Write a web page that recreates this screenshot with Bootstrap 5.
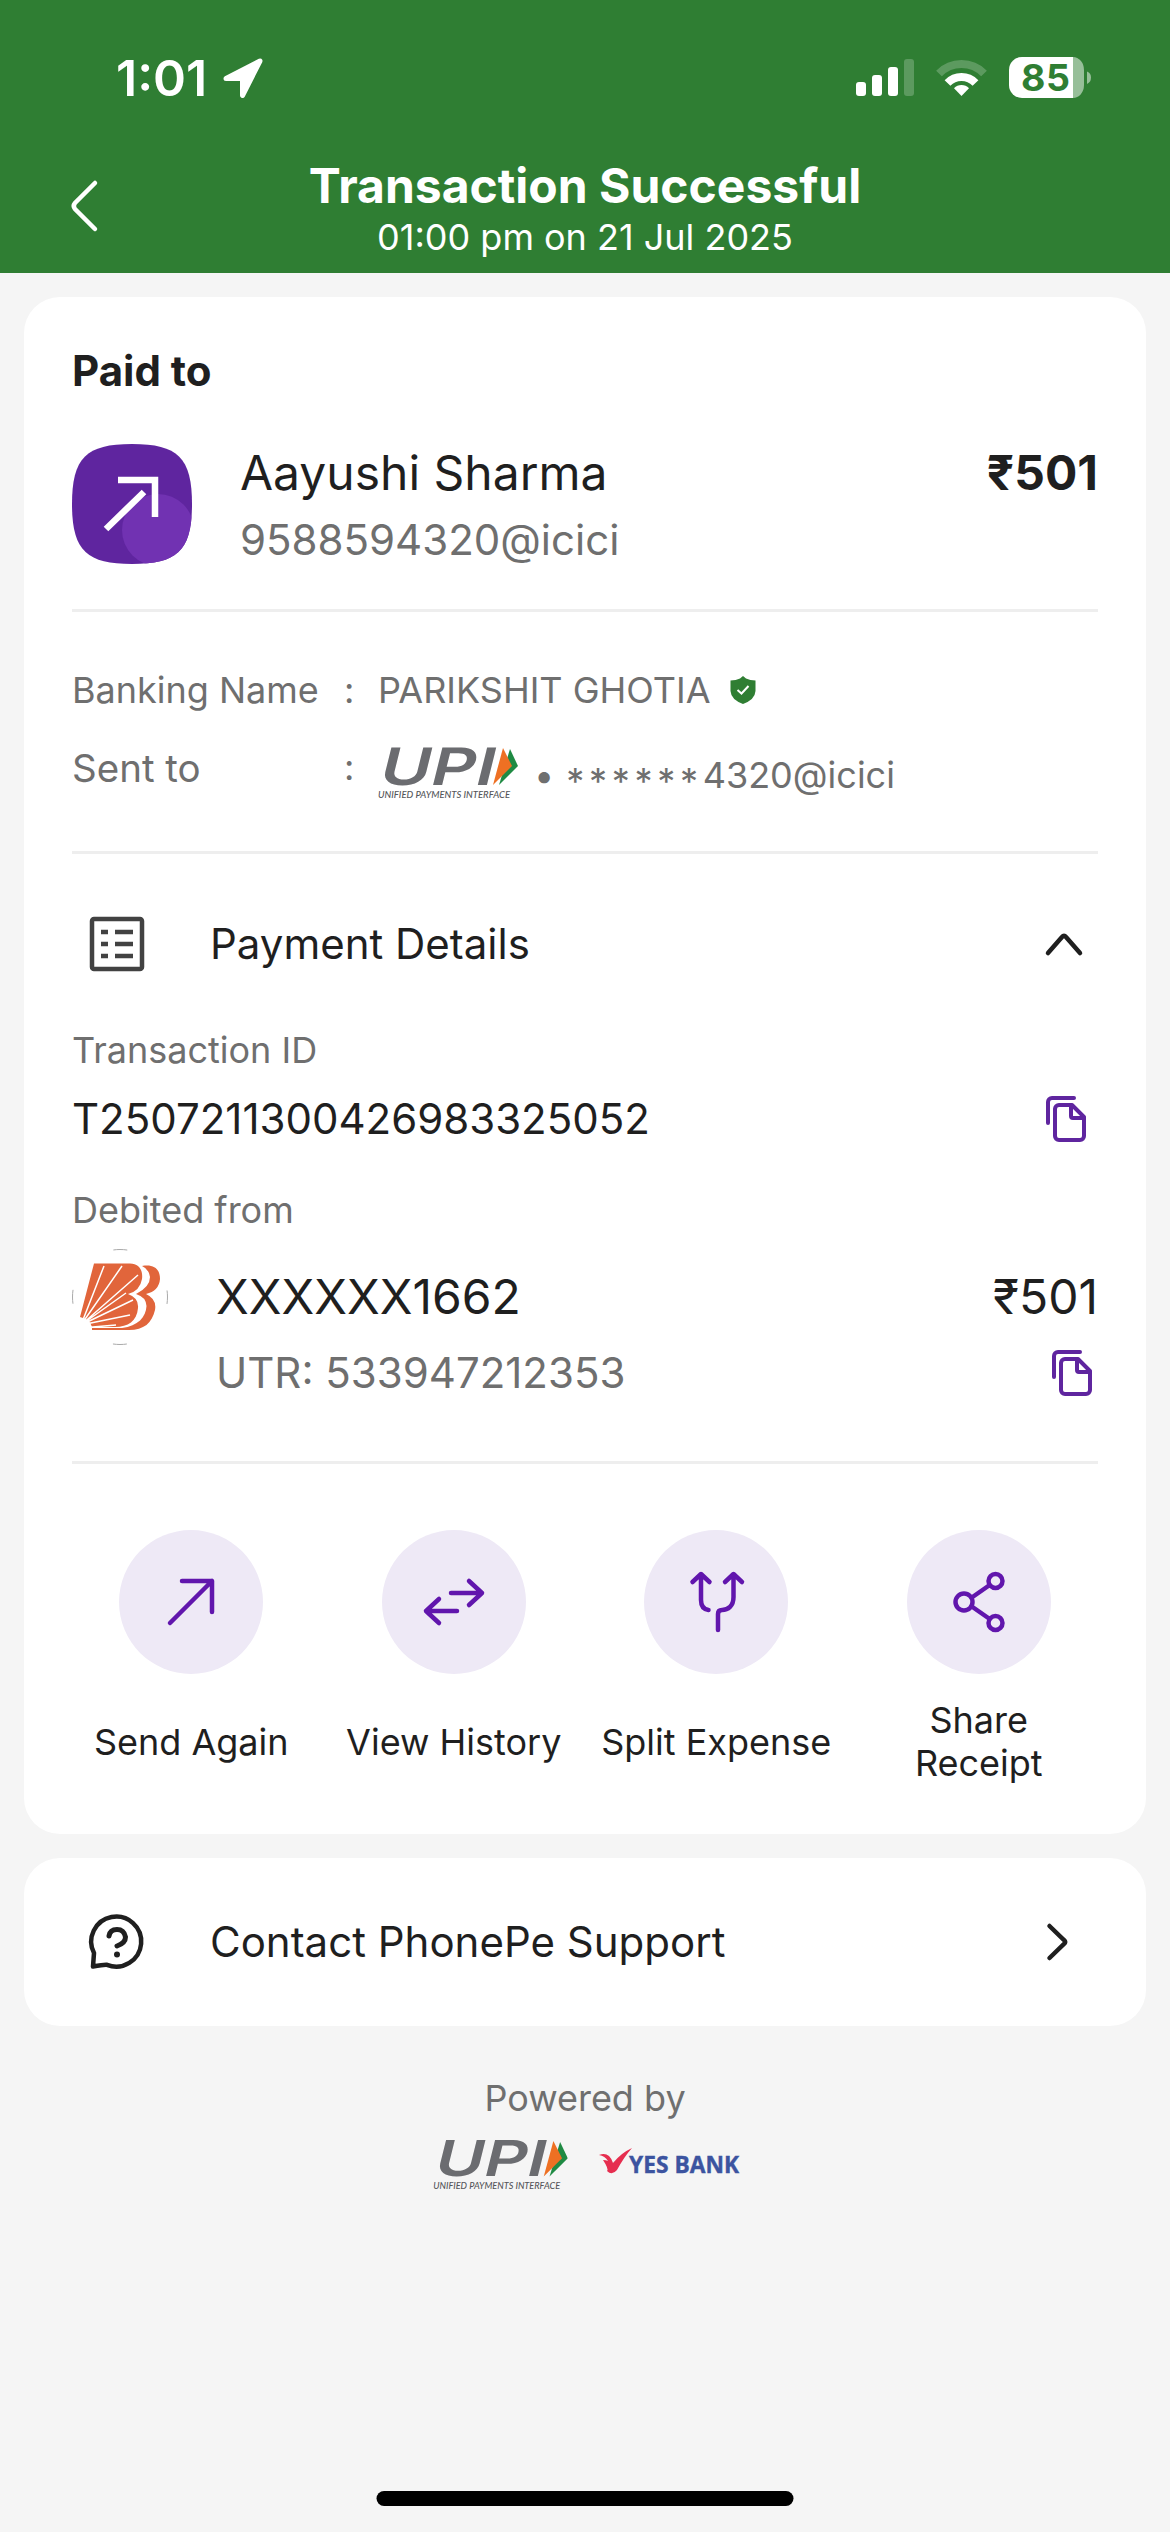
<!DOCTYPE html>
<html lang="en">
<head>
<meta charset="utf-8">
<meta name="viewport" content="width=device-width, initial-scale=1">
<title>Transaction Successful</title>
<link rel="stylesheet" href="https://cdn.jsdelivr.net/npm/bootstrap@5.3.0/dist/css/bootstrap.min.css">
<style>
  body{font-family:Inter,"Noto Sans",sans-serif;background:#f5f5f5;color:#1f1f1f;width:1170px;height:2532px;overflow:hidden}
  svg{display:block;flex:none;overflow:visible}
  .topbar{background:#2f7e33;height:273px}
  .statusbar{height:156px;padding:0 79px 0 116px}
  .status-icons{gap:22px}
  .clock{font-size:50px;font-weight:600;line-height:60px;letter-spacing:0}
  .appbar{padding-top:3px}
  .side{width:120px;padding:22px 0 0 71px}
  .title{font-size:48px;line-height:54px}
  .t48{font-size:48px;line-height:58px}
  .t42{font-size:42px;line-height:46px}
  .t36{font-size:36px;line-height:48px}
  .dim{color:#6f6f6f}
  .section-label{font-size:36px;line-height:46px;color:#6f6f6f}
  .panel{margin:24px 24px 0;border-radius:36px;background:#fff}
  .panel-main{height:1537px;padding:48px 48px 0}
  .paid-to{font-size:42px;line-height:52px}
  .payee{margin-top:47px;height:120px}
  .vpa{margin-top:15px}
  .rule{height:3px;background:#eee}
  .lbl{width:272px}
  .lbl-sent{font-size:38.5px;line-height:50px}
  .colon{width:34px}
  .bank-name{margin-top:54px}
  .sent-row{margin-top:29px;height:56px}
  .shield{margin-left:19px}
  .details-head{margin-top:63px;padding:0 16px 0 18px}
  .row-title{margin-left:66px}
  .txn{margin-top:23px;padding-right:12px}
  .utr{margin-top:5px;padding:0 6px 0 144px}
  .tool{width:144px;height:144px;border-radius:50%;background:#eee9f6}
  .tool svg{fill:none;stroke:#6116ad;stroke-width:4.5;stroke-linecap:round;stroke-linejoin:round}
  .tool-label{height:86px;line-height:43px;font-size:36px;margin-top:25px}
  .actions{margin:66px -12px 0}
  .bankmark{margin-right:48px}
  .stars{vertical-align:-6px;letter-spacing:4.7px}
  .support{height:168px;padding:0 78px 0 66px}
  .powered{margin-top:48px}
  .logos{margin-top:18px;gap:31px;padding-left:2px}
  .homebar{width:417px;height:15px;border-radius:8px;background:#000;bottom:26px}
</style>
<script src="https://cdn.jsdelivr.net/npm/bootstrap@5.3.0/dist/js/bootstrap.bundle.min.js"></script>
</head>
<body class="position-relative">
<svg width="0" height="0" class="position-absolute">
  <defs>
    <symbol id="copy" viewBox="0 0 40 46">
      <g fill="none" stroke="#5f259f" stroke-width="4" stroke-linecap="round" stroke-linejoin="round">
        <path d="M2 27V6a4 4 0 0 1 4-4h22"/>
        <path d="M13 9H26L38 21V40a4 4 0 0 1-4 4H13a4 4 0 0 1-4-4V13a4 4 0 0 1 4-4Z"/>
        <path d="M25 9V20a2 2 0 0 0 2 2H38"/>
      </g>
    </symbol>
    <symbol id="upi" viewBox="0 0 140 52">
      <text transform="translate(-1 37.5) skewX(-14)" font-family="Inter" font-weight="600" font-size="51.5" textLength="115" lengthAdjust="spacingAndGlyphs" fill="#6b6c70">UPI</text>
      <path d="M132 2L140 19L121 38Z" fill="#1f8a43"/>
      <path d="M125 1L134 19L115 38Z" fill="#ee7023"/>
      <text x="0" y="51" font-family="Lato" font-style="italic" font-weight="500" font-size="10.4" textLength="132" lengthAdjust="spacingAndGlyphs" fill="#55565a">UNIFIED PAYMENTS INTERFACE</text>
    </symbol>
  </defs>
</svg>

<header class="topbar text-white">
  <div class="statusbar d-flex align-items-center">
    <span class="clock">1:01</span>
    <svg width="40" height="40" viewBox="0 0 40 40" class="ms-3"><path d="M37 3L19.500 37.500V20.500H3Z" fill="#fff" stroke="#fff" stroke-width="5" stroke-linejoin="round"/></svg>
    <div class="status-icons d-flex align-items-center ms-auto">
    <svg width="58" height="38" viewBox="0 0 58 38"><g fill="#fff"><rect y="23" width="10" height="14" rx="3"/><rect x="16" y="16" width="10" height="21" rx="3"/><rect x="32" y="8" width="10" height="29" rx="3"/><rect x="48" width="10" height="37" rx="3" opacity=".22"/></g></svg>
    <svg width="51" height="38" viewBox="0 0 51 38">
      <g fill="none" stroke="#fff" stroke-width="8"><path d="M3 14.500A31.500 31.500 0 0 1 48 14.500" opacity=".22"/><path d="M11.500 24A19.500 19.500 0 0 1 39.500 24"/></g>
      <path d="M25.500 37L18 29.200A10.500 10.500 0 0 1 33 29.200Z" fill="#fff"/></svg>
    <svg width="82" height="42" viewBox="0 0 82 42">
      <path d="M13 0H64V41H13A13 13 0 0 1 0 28V13A13 13 0 0 1 13 0Z" fill="#fff"/>
      <path d="M64 0A11 13 0 0 1 75 13V28A11 13 0 0 1 64 41Z" fill="#97bf99"/>
      <path d="M78 14.500Q82 16 82 20.500T78 27Z" fill="#97bf99"/>
      <text x="12" y="34" font-family="Inter" font-weight="700" font-size="37.500" textLength="49" fill="#2f7e33">85</text></svg>
    </div>
  </div>
  <div class="appbar d-flex">
    <div class="side"><svg width="26" height="50" viewBox="0 0 26 50"><path d="M24 2L4 22Q1.500 25 4 28L24 48" fill="none" stroke="#fff" stroke-width="4.500" stroke-linecap="round"/></svg></div>
    <div class="flex-fill text-center">
      <div class="fw-bold title">Transaction Successful</div>
      <div class="t36">01:00 pm on 21 Jul 2025</div>
    </div>
    <div class="side"></div>
  </div>
</header>

<main>
  <section class="panel panel-main">
    <div class="fw-bold paid-to">Paid to</div>
    <div class="d-flex payee">
      <svg width="120" height="120" viewBox="0 0 120 120">
        <clipPath id="sq"><path d="M60 0C106 0 120 14 120 60S106 120 60 120S0 106 0 60S14 0 60 0Z"/></clipPath>
        <g clip-path="url(#sq)"><rect width="120" height="120" fill="#5f259f"/><circle cx="86" cy="86" r="36" fill="#7132b2"/></g>
        <path d="M46 36H83V73M34 85L72 48" fill="none" stroke="#fff" stroke-width="6.500"/>
      </svg>
      <div class="flex-fill ms-5">
        <div class="d-flex justify-content-between t48"><span>Aayushi Sharma</span><span class="fw-bold">₹501</span></div>
        <div class="t42 dim vpa">9588594320@icici</div>
      </div>
    </div>
    <div class="rule" style="margin-top:45px"></div>

    <div class="d-flex align-items-center t36 dim bank-name">
      <span class="lbl">Banking Name</span><span class="colon">:</span>
      <span>PARIKSHIT GHOTIA</span>
      <svg class="shield" width="26" height="28" viewBox="0 0 26 28"><path d="M13 0L16 2.500Q20 4.500 25.500 4.500V15Q25 23.500 13 28Q1 23.500 .5 15V4.500Q6 4.500 10 2.500Z" fill="#2f7e33"/><path d="M7.500 14L11.500 17.500L18.500 10" fill="none" stroke="#fff" stroke-width="2"/></svg>
    </div>
    <div class="d-flex t36 dim sent-row">
      <span class="lbl lbl-sent">Sent to</span><span class="colon">:</span>
      <svg class="mt-1" width="140" height="52"><use href="#upi"/></svg>
      <span class="mt-2" style="margin-left:16px">•</span>
      <span class="mt-2" style="margin-left:12px"><span class="stars">******</span>4320@icici</span>
    </div>
    <div class="rule" style="margin-top:52px"></div>

    <div class="d-flex align-items-center details-head">
      <svg width="54" height="54" viewBox="0 0 54 54"><g fill="none" stroke="#424242" stroke-width="4.500"><rect x="2" y="2" width="50" height="50" rx="2"/><path d="M11 15H18M25 15H43M11 27H18M25 27H43M11 39H18M25 39H43"/></g></svg>
      <span class="t42 flex-fill row-title">Payment Details</span>
      <svg width="36" height="22" viewBox="0 0 36 22"><path d="M2 20L16 4Q18 1.500 20 4L34 20" fill="none" stroke="#1f1f1f" stroke-width="4.500" stroke-linecap="round"/></svg>
    </div>
    <div class="section-label" style="margin-top:56px">Transaction ID</div>
    <div class="d-flex justify-content-between t42 txn"><span>T2507211300426983325052</span><svg width="40" height="46"><use href="#copy"/></svg></div>
    <div class="section-label" style="margin-top:45px">Debited from</div>
    <div class="d-flex align-items-center t48 mt-3">
      <svg class="bankmark" width="96" height="96" viewBox="0 0 96 96">
        <circle cx="48" cy="48" r="47.500" fill="none" stroke="#aaa" stroke-width="1" stroke-dasharray="14 60.600" stroke-dashoffset="7"/>
        <path d="M70 17C82 15 88 20 88 30Q87 42 74 45Q85 50 83 61C80 74 72 81 57 81H20V79H50C66 77 74 68 74.500 57Q74 48 64 45Q78 38 78 28Q77 20 70 17Z" fill="#e1653b"/>
        <path d="M22 14.500H58C68 15 71 22 70 30Q68 42 56 45Q67 49 66 59C65 72 56 78 43 78H20Q18 70 8 68Z" fill="#e1653b"/>
        <path d="M9 76L32 17M9 76L50 17M9 76L66 26M9 76L54 44M9 76L61 51M9 76L58 66M9 79L44 76" stroke="#fff" stroke-width="1.500"/>
      </svg>
      <span class="flex-fill">XXXXXX1662</span><span>₹501</span>
    </div>
    <div class="d-flex justify-content-between t42 dim utr"><span>UTR: 533947212353</span><svg width="40" height="46"><use href="#copy"/></svg></div>
    <div class="rule" style="margin-top:65px"></div>

    <div class="row g-0 text-center actions">
      <div class="col-3 d-flex flex-column align-items-center">
        <div class="tool"><svg width="144" height="144"><path d="M63 51H93V82M51 93L93 51"/></svg></div>
        <div class="tool-label d-flex align-items-center">Send Again</div>
      </div>
      <div class="col-3 d-flex flex-column align-items-center">
        <div class="tool"><svg width="144" height="144"><path d="M69 63H100M87 51L100 63L87 75M75 81H44M57 69L44 81L57 93"/></svg></div>
        <div class="tool-label d-flex align-items-center text-nowrap">View History</div>
      </div>
      <div class="col-3 d-flex flex-column align-items-center">
        <div class="tool"><svg width="144" height="144"><path d="M48.500 52L57 44L65.500 52M57 45V70Q57 79 64.500 80M81 52L89.500 44L98 52M89.500 45V67C89.500 76 84 80 78 80Q74 80 74 84V100"/></svg></div>
        <div class="tool-label d-flex align-items-center text-nowrap">Split Expense</div>
      </div>
      <div class="col-3 d-flex flex-column align-items-center">
        <div class="tool"><svg width="144" height="144"><circle cx="57" cy="72" r="8.500"/><circle cx="88.500" cy="51" r="7"/><circle cx="88.500" cy="93" r="7"/><path d="M65.500 67L82 55.500M65.500 77L82 88.500"/></svg></div>
        <div class="tool-label">Share<br>Receipt</div>
      </div>
    </div>
  </section>

  <section class="panel support d-flex align-items-center">
    <svg width="54" height="54" viewBox="0 0 54 54" fill="none" stroke="#1f1f1f" stroke-width="4.500" stroke-linecap="round" stroke-linejoin="round"><path d="M3 51.500L4 38A25 25 0 1 1 17 49.800Q14 49.500 3 51.500Z"/><path d="M19 21Q20 14.500 27 14.500T35.500 22Q35.500 28 27 31" stroke-width="5"/><circle cx="27" cy="39.500" r="3" fill="#1f1f1f" stroke="none"/></svg>
    <span class="t42 flex-fill row-title">Contact PhonePe Support</span>
    <svg width="21" height="36" viewBox="0 0 21 36"><path d="M2.500 2L17 16Q19.500 18 17 20L2.500 34" fill="none" stroke="#1f1f1f" stroke-width="4.500" stroke-linecap="round"/></svg>
  </section>
</main>

<footer class="text-center powered">
  <div class="t36 dim">Powered by</div>
  <div class="d-flex justify-content-center logos">
    <svg width="135" height="50" viewBox="0 0 140 52"><use href="#upi"/></svg>
    <svg width="140" height="50" viewBox="0 0 140 50">
      <path d="M0 15Q6 12.500 10 16Q13 19 14 23Q22 13 33 8Q25 17 18 30Q13 36 8 31Q10 29 4 20Q7 20 9 21Q6 16 0 15Z" fill="#e62e4f"/>
      <text x="30" y="33" font-family="Open Sans" font-weight="700" font-size="23" textLength="110" lengthAdjust="spacingAndGlyphs" fill="#3c54a0" stroke="#3c54a0" stroke-width=".4">YES BANK</text></svg>
  </div>
</footer>
<div class="homebar position-absolute start-50 translate-middle-x"></div>
</body>
</html>
